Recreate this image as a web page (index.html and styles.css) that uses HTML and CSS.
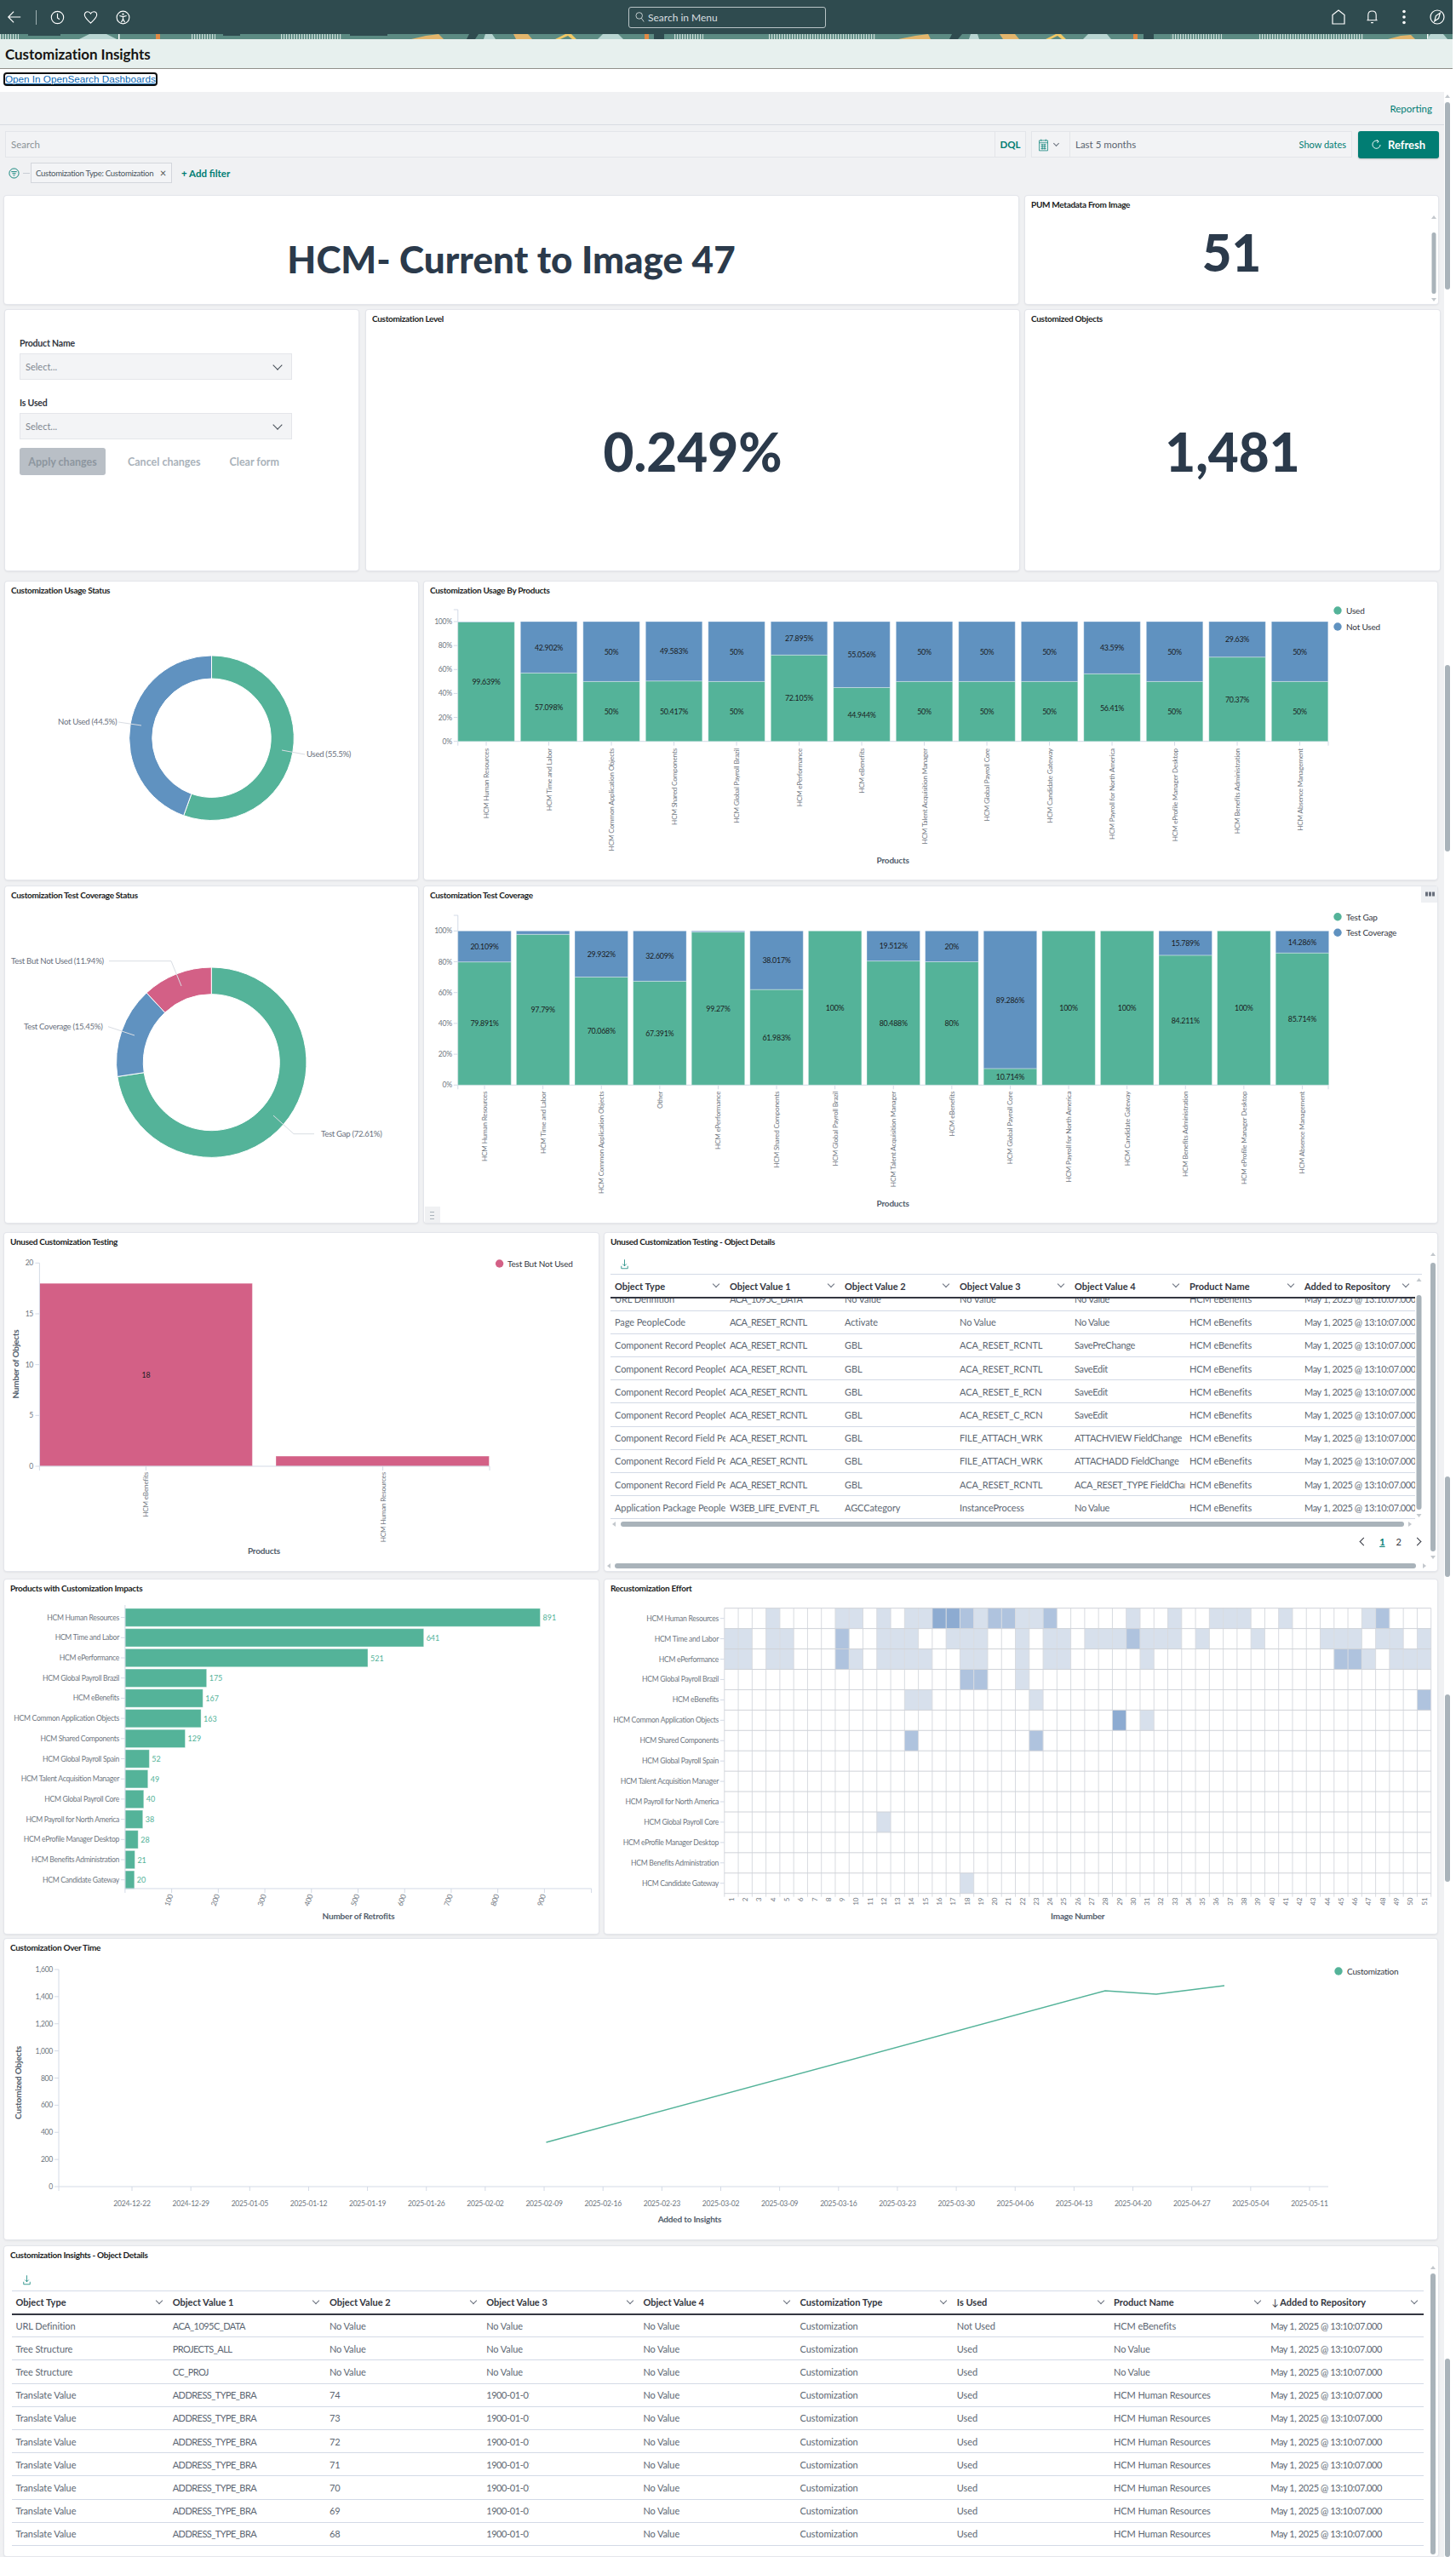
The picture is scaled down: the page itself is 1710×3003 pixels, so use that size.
FILE: index.html
```html
<!DOCTYPE html>
<html lang="en">
<head>
<meta charset="utf-8">
<title>Customization Insights</title>
<link rel="stylesheet" href="styles.css">
</head>
<body>
<header class="topbar">
  <div class="nav-left">
    <svg class="ico ico-back" viewBox="0 0 20 20"><path d="M18 10H2M9 3l-7 7 7 7"/></svg>
    <span class="nav-sep"></span>
    <svg class="ico ico-clock" viewBox="0 0 18 18"><circle cx="9" cy="9" r="7.6"/><path d="M9 4v5.4l2.6 2"/></svg>
    <svg class="ico ico-heart" viewBox="0 0 18 18"><path d="M9 16C5 12 1.4 9.2 1.4 5.8 1.4 3.4 3.2 1.8 5.2 1.8 6.8 1.8 8.2 2.7 9 4.2 9.8 2.7 11.2 1.8 12.8 1.8c2 0 3.8 1.6 3.8 4C16.600 9.200 13 12 9 16z"/></svg>
    <svg class="ico ico-access" viewBox="0 0 18 18"><circle cx="9" cy="9" r="7.8"/><circle class="dot" cx="9" cy="4.9" r="1.1"/><path d="M4.600 6.900L9 8l4.400-1.100M9 8v3M9 11l-2.200 4M9 11l2.200 4"/></svg>
  </div>
  <div class="menu-search">
    <svg class="ico-s" viewBox="0 0 14 16"><circle cx="6" cy="6" r="4.800"/><path d="M9.400 9.800L13 15"/></svg>
    <span>Search in Menu</span>
  </div>
  <div class="nav-right">
    <svg class="ico ico-home" viewBox="0 0 16 18"><path d="M1 17V6.500L8 1l7 5.500V17z"/></svg>
    <svg class="ico ico-bell" viewBox="0 0 16 18"><path d="M3 13V6.500C3 3.500 5 1.600 8 1.600s5 1.900 5 4.900V13zM1.500 13h13M6.500 16h3"/></svg>
    <svg class="ico ico-kebab" viewBox="0 0 6 18"><circle class="dot" cx="3" cy="2.500" r="1.800"/><circle class="dot" cx="3" cy="9" r="1.800"/><circle class="dot" cx="3" cy="15.500" r="1.800"/></svg>
    <svg class="ico ico-compass" viewBox="0 0 18 18"><circle cx="9" cy="9" r="8"/><path d="M12.400 4.200L10.600 10.600 5.800 13.800 7.400 7.600z"/></svg>
  </div>
</header>

<svg class="banner" viewBox="0 0 1706 6" preserveAspectRatio="none">
  <defs><pattern id="stripes" width="3" height="6" patternUnits="userSpaceOnUse"><rect width="1.200" height="6" fill="#cfe0dc"/></pattern></defs>
  <rect x="0" width="22" height="6" fill="url(#stripes)"/><rect x="33" width="38" height="2" fill="#2f4b4f"/>
  <polygon points="93,6 105,0 125,0 137,6" fill="#b9d5d2"/><rect x="139" width="1.500" height="6" fill="#fff"/>
  <rect x="183" width="5" height="6" fill="#e08a45"/><rect x="225" width="28" height="6" fill="url(#stripes)"/>
  <rect x="262" width="20" height="2" fill="#2f4b4f"/><rect x="329" width="72" height="6" fill="url(#stripes)"/><rect x="411" width="44" height="2" fill="#2f4b4f"/>
  <polygon points="483,6 500,2 515,0 521,6" fill="#e3b56c"/><polygon points="551,0 562,0 558,6 548,6" fill="#2f4b4f"/>
  <polygon points="570,0 578,0 582,6 568,6" fill="#b9d5d2"/><polygon points="603,0 620,0 625,6 606,6" fill="#e3b56c"/>
  <polygon points="652,6 664,0 671,0 677,6 672,6 667,2 658,6" fill="#f0c866"/><polygon points="702,6 708,0 726,0 732,6" fill="#b9d5d2"/>
  <rect x="757" width="5" height="6" fill="#e08a45"/><rect x="768" width="12" height="6" fill="#2f4b4f"/><rect x="792" width="34" height="6" fill="url(#stripes)"/>
  <rect x="903" width="125" height="6" fill="url(#stripes)"/><polygon points="1055,6 1075,2 1090,0 1093,6" fill="#e3b56c"/>
  <polygon points="1118,0 1130,0 1125,6 1115,6" fill="#2f4b4f"/><polygon points="1140,0 1148,0 1150,6 1138,6" fill="#b9d5d2"/>
  <polygon points="1174,0 1192,0 1197,6 1178,6" fill="#e3b56c"/><polygon points="1228,6 1240,0 1246,0 1252,6 1247,6 1242,2 1234,6" fill="#f0c866"/>
  <polygon points="1272,6 1278,0 1300,0 1305,6" fill="#b9d5d2"/><rect x="1331" width="5" height="6" fill="#e08a45"/><rect x="1343" width="12" height="6" fill="#2f4b4f"/>
  <rect x="1375" width="60" height="6" fill="url(#stripes)"/><rect x="1478" width="124" height="6" fill="url(#stripes)"/>
  <polygon points="1630,6 1645,2 1657,1 1662,6" fill="#e3b56c"/><rect x="1676" width="1.500" height="6" fill="#fff"/><polygon points="1676,6 1680,0 1695,0 1700,6" fill="#b9d5d2"/>
</svg>

<div class="titleband"><h1>Customization Insights</h1></div>
<div class="linkbar"><a class="oslink" href="#">Open In OpenSearch Dashboards</a></div>

<main class="main">
  <div class="reportbar"><span class="teal">Reporting</span></div>

  <div class="querybar">
    <div class="qsearch"><span class="qtext">Search</span><span class="dql">DQL</span></div>
    <div class="datepick">
      <span class="dp-ico">
        <svg class="cal" viewBox="0 0 12 16"><path d="M.5 2.500h11v13H.5zM.5 5.500h11M3 1v2.500M9 1v2.500M2.500 8h7M2.500 10.500h7M2.500 13h7M4.500 7v7M7.500 7v7"/></svg>
        <i class="chev"></i>
      </span>
      <span class="dp-text">Last 5 months</span>
      <span class="dp-show">Show dates</span>
    </div>
    <button class="refresh"><svg class="ref" viewBox="0 0 12 14"><path d="M8.800 2.600A5 5 0 1 0 11 7M6.400.8l2.400 1.800-1.800 2.200"/></svg>Refresh</button>
  </div>

  <div class="filterbar">
    <svg class="f-ico" viewBox="0 0 14 14"><circle cx="7" cy="7" r="6"/><path d="M3.500 5h7M4.800 7.300h4.400M6 9.600h2"/></svg>
    <span class="f-dash"></span>
    <span class="chip">Customization Type: Customization<i class="x">×</i></span>
    <span class="addf">+ Add filter</span>
  </div>

  <div class="row r1">
    <section class="panel center"><div class="bigtitle">HCM- Current to Image 47</div></section>
    <section class="panel"><h2>PUM Metadata From Image</h2><div class="metric m51">51</div></section>
  </div>

  <div class="row r2">
    <section class="panel form">
      <label>Product Name</label>
      <div class="sel">Select...</div>
      <label class="second">Is Used</label>
      <div class="sel">Select...</div>
      <div class="btns"><span class="apply">Apply changes</span><span class="ghost g1">Cancel changes</span><span class="ghost g2">Clear form</span></div>
    </section>
    <section class="panel"><h2>Customization Level</h2><div class="metric m-big">0.249%</div></section>
    <section class="panel"><h2>Customized Objects</h2><div class="metric m-big">1,481</div></section>
  </div>

  <div class="row r3">
    <section class="panel"><h2>Customization Usage Status</h2><svg class="canvas" id="c-usage"></svg></section>
    <section class="panel"><h2>Customization Usage By Products</h2><svg class="canvas" id="c-usagebars"></svg></section>
  </div>

  <div class="row r4">
    <section class="panel"><h2>Customization Test Coverage Status</h2><svg class="canvas" id="c-cover"></svg></section>
    <section class="panel"><h2>Customization Test Coverage</h2><svg class="canvas" id="c-coverbars"></svg></section>
  </div>

  <div class="row r5">
    <section class="panel"><h2>Unused Customization Testing</h2><svg class="canvas" id="c-unused"></svg></section>
    <section class="panel tpanel"><h2>Unused Customization Testing - Object Details</h2>
      <svg class="dl" viewBox="0 0 12 16"><path d="M6 1v10M3 8l3 3 3-3M1 11v4h10v-4"/></svg>
      <div class="thead-wrap">
      <table class="tbl t7"><thead><tr><th>Object Type</th><th>Object Value 1</th><th>Object Value 2</th><th>Object Value 3</th><th>Object Value 4</th><th>Product Name</th><th>Added to Repository</th></tr></thead></table>
      </div>
      <div class="tscroll">
      <table class="tbl t7"><tbody>
        <tr><td>URL Definition</td><td>ACA_1095C_DATA</td><td>No Value</td><td>No Value</td><td>No Value</td><td>HCM eBenefits</td><td>May 1, 2025 @ 13:10:07.000</td></tr>
        <tr><td>Page PeopleCode</td><td>ACA_RESET_RCNTL</td><td>Activate</td><td>No Value</td><td>No Value</td><td>HCM eBenefits</td><td>May 1, 2025 @ 13:10:07.000</td></tr>
        <tr><td>Component Record PeopleCode</td><td>ACA_RESET_RCNTL</td><td>GBL</td><td>ACA_RESET_RCNTL</td><td>SavePreChange</td><td>HCM eBenefits</td><td>May 1, 2025 @ 13:10:07.000</td></tr>
        <tr><td>Component Record PeopleCode</td><td>ACA_RESET_RCNTL</td><td>GBL</td><td>ACA_RESET_RCNTL</td><td>SaveEdit</td><td>HCM eBenefits</td><td>May 1, 2025 @ 13:10:07.000</td></tr>
        <tr><td>Component Record PeopleCode</td><td>ACA_RESET_RCNTL</td><td>GBL</td><td>ACA_RESET_E_RCN</td><td>SaveEdit</td><td>HCM eBenefits</td><td>May 1, 2025 @ 13:10:07.000</td></tr>
        <tr><td>Component Record PeopleCode</td><td>ACA_RESET_RCNTL</td><td>GBL</td><td>ACA_RESET_C_RCN</td><td>SaveEdit</td><td>HCM eBenefits</td><td>May 1, 2025 @ 13:10:07.000</td></tr>
        <tr><td>Component Record Field PeopleCode</td><td>ACA_RESET_RCNTL</td><td>GBL</td><td>FILE_ATTACH_WRK</td><td>ATTACHVIEW FieldChange</td><td>HCM eBenefits</td><td>May 1, 2025 @ 13:10:07.000</td></tr>
        <tr><td>Component Record Field PeopleCode</td><td>ACA_RESET_RCNTL</td><td>GBL</td><td>FILE_ATTACH_WRK</td><td>ATTACHADD FieldChange</td><td>HCM eBenefits</td><td>May 1, 2025 @ 13:10:07.000</td></tr>
        <tr><td>Component Record Field PeopleCode</td><td>ACA_RESET_RCNTL</td><td>GBL</td><td>ACA_RESET_RCNTL</td><td>ACA_RESET_TYPE FieldChange</td><td>HCM eBenefits</td><td>May 1, 2025 @ 13:10:07.000</td></tr>
        <tr><td>Application Package PeopleCode</td><td>W3EB_LIFE_EVENT_FL</td><td>AGCCategory</td><td>InstanceProcess</td><td>No Value</td><td>HCM eBenefits</td><td>May 1, 2025 @ 13:10:07.000</td></tr>
      </tbody></table>
      </div>
      <div class="pager"><i class="pg-l"></i><b>1</b><span>2</span><i class="pg-r"></i></div>
    </section>
  </div>

  <div class="row r6">
    <section class="panel"><h2>Products with Customization Impacts</h2><svg class="canvas" id="c-impact"></svg></section>
    <section class="panel"><h2>Recustomization Effort</h2><svg class="canvas" id="c-heat"></svg></section>
  </div>

  <div class="row r7">
    <section class="panel"><h2>Customization Over Time</h2><svg class="canvas" id="c-time"></svg></section>
  </div>

  <div class="row r8">
    <section class="panel tpanel2"><h2>Customization Insights - Object Details</h2>
      <svg class="dl dl2" viewBox="0 0 12 16"><path d="M6 1v10M3 8l3 3 3-3M1 11v4h10v-4"/></svg>
      <table class="tbl t9">
        <thead><tr><th>Object Type</th><th>Object Value 1</th><th>Object Value 2</th><th>Object Value 3</th><th>Object Value 4</th><th>Customization Type</th><th>Is Used</th><th>Product Name</th><th><span class="sort">↓</span>Added to Repository</th></tr></thead>
        <tbody>
          <tr><td>URL Definition</td><td>ACA_1095C_DATA</td><td>No Value</td><td>No Value</td><td>No Value</td><td>Customization</td><td>Not Used</td><td>HCM eBenefits</td><td>May 1, 2025 @ 13:10:07.000</td></tr>
          <tr><td>Tree Structure</td><td>PROJECTS_ALL</td><td>No Value</td><td>No Value</td><td>No Value</td><td>Customization</td><td>Used</td><td>No Value</td><td>May 1, 2025 @ 13:10:07.000</td></tr>
          <tr><td>Tree Structure</td><td>CC_PROJ</td><td>No Value</td><td>No Value</td><td>No Value</td><td>Customization</td><td>Used</td><td>No Value</td><td>May 1, 2025 @ 13:10:07.000</td></tr>
          <tr><td>Translate Value</td><td>ADDRESS_TYPE_BRA</td><td>74</td><td><span class="dt">1900-01-01</span></td><td>No Value</td><td>Customization</td><td>Used</td><td>HCM Human Resources</td><td>May 1, 2025 @ 13:10:07.000</td></tr>
          <tr><td>Translate Value</td><td>ADDRESS_TYPE_BRA</td><td>73</td><td><span class="dt">1900-01-01</span></td><td>No Value</td><td>Customization</td><td>Used</td><td>HCM Human Resources</td><td>May 1, 2025 @ 13:10:07.000</td></tr>
          <tr><td>Translate Value</td><td>ADDRESS_TYPE_BRA</td><td>72</td><td><span class="dt">1900-01-01</span></td><td>No Value</td><td>Customization</td><td>Used</td><td>HCM Human Resources</td><td>May 1, 2025 @ 13:10:07.000</td></tr>
          <tr><td>Translate Value</td><td>ADDRESS_TYPE_BRA</td><td>71</td><td><span class="dt">1900-01-01</span></td><td>No Value</td><td>Customization</td><td>Used</td><td>HCM Human Resources</td><td>May 1, 2025 @ 13:10:07.000</td></tr>
          <tr><td>Translate Value</td><td>ADDRESS_TYPE_BRA</td><td>70</td><td><span class="dt">1900-01-01</span></td><td>No Value</td><td>Customization</td><td>Used</td><td>HCM Human Resources</td><td>May 1, 2025 @ 13:10:07.000</td></tr>
          <tr><td>Translate Value</td><td>ADDRESS_TYPE_BRA</td><td>69</td><td><span class="dt">1900-01-01</span></td><td>No Value</td><td>Customization</td><td>Used</td><td>HCM Human Resources</td><td>May 1, 2025 @ 13:10:07.000</td></tr>
          <tr><td>Translate Value</td><td>ADDRESS_TYPE_BRA</td><td>68</td><td><span class="dt">1900-01-01</span></td><td>No Value</td><td>Customization</td><td>Used</td><td>HCM Human Resources</td><td>May 1, 2025 @ 13:10:07.000</td></tr>
        </tbody>
      </table>
    </section>
  </div>
</main>

<svg class="overlay" id="overlay" viewBox="0 0 1710 3003"></svg>
<script src="charts.js"></script>
</body>
</html>
```
FILE: styles.css
```css
* { box-sizing: border-box; }
html, body { margin: 0; padding: 0; height: 3003px; overflow: hidden; background: #fff; }
body { width: 1710px; position: relative; font-family: Lato, "Noto Sans", sans-serif; color: #343741; }

.topbar { width: 1706px; height: 40px; background: #2f4b4f; display: flex; align-items: center; position: relative; }
.ico { fill: none; stroke: #fff; stroke-width: 1.2; display: block; }
.ico .dot { fill: #fff; stroke: none; }
.nav-left { display: flex; align-items: center; height: 40px; padding-left: 8px; }
.ico-back { width: 18px; height: 18px; stroke-width: 1.3; }
.nav-sep { width: 1px; height: 17px; background: #9fb0b2; margin: 0 16px 0 16px; }
.ico-clock { width: 17px; height: 17px; }
.ico-heart { width: 17px; height: 17px; margin-left: 22px; }
.ico-access { width: 17px; height: 17px; margin-left: 21px; }
.menu-search { margin-left: 585px; width: 232px; height: 25px; border: 1px solid #b9c4c6; border-radius: 3px; display: flex; align-items: center; padding-left: 7px; color: #d9dfe0; font-size: 12px; }
.ico-s { width: 11px; height: 14px; fill: none; stroke: #d9dfe0; stroke-width: 1.100; margin-right: 4px; }
.nav-right { margin-left: auto; display: flex; align-items: center; padding-right: 9px; }
.ico-home { width: 16px; height: 18px; }
.ico-bell { width: 15px; height: 18px; margin-left: 24px; }
.ico-kebab { width: 6px; height: 18px; margin-left: 27px; }
.ico-compass { width: 18px; height: 18px; margin-left: 27px; }

.banner { display: block; width: 1706px; height: 6px; background: #5c8b83; }
.titleband { width: 1706px; height: 35px; background: #e7f0ee; border-bottom: 1px solid #908f8a; display: flex; align-items: center; padding-left: 6px; }
.titleband h1 { margin: 0; font-size: 17px; font-weight: 700; color: #161513; letter-spacing: -.05px; }
.linkbar { height: 27px; padding: 6px 0 0 6px; display: flex; align-items: flex-start; }
.oslink { display: block; font-family: "Liberation Sans", sans-serif; font-size: 11.700px; line-height: 12px; color: #0b68b5; outline: 2px solid #111; border-radius: 2px; white-space: nowrap; }

.main { width: 1696px; height: 2895px; background: #f0f1f3; }
.teal { color: #017d73; }
.reportbar { height: 39px; border-bottom: 1px solid #d8dbe1; display: flex; justify-content: flex-end; align-items: center; padding-right: 14px; font-size: 11.500px; }
.querybar { display: flex; height: 32px; margin-top: 7px; padding-left: 6px; font-size: 11.500px; }
.qsearch { width: 1199px; height: 31px; background: #f2f3f5; border: 1px solid #e3e5e9; display: flex; align-items: center; justify-content: space-between; padding-left: 6px; }
.qtext { color: #8b9296; }
.dql { width: 36px; height: 100%; border-left: 1px solid #e3e5e9; display: flex; align-items: center; justify-content: center; color: #017d73; font-weight: 700; }
.datepick { width: 377px; height: 31px; margin-left: 6px; background: #f2f3f5; border: 1px solid #e3e5e9; display: flex; align-items: center; }
.dp-ico { width: 45px; height: 100%; border-right: 1px solid #e3e5e9; display: flex; align-items: center; padding-left: 8px; }
.cal { width: 11px; height: 16px; fill: none; stroke: #017d73; stroke-width: .8; }
.chev { width: 5px; height: 5px; border-right: 1px solid #69707d; border-bottom: 1px solid #69707d; transform: rotate(45deg); margin: -3px 0 0 7px; }
.dp-text { margin-left: 6px; color: #5b6570; }
.dp-show { margin-left: auto; margin-right: 6px; color: #017d73; font-size: 11px; }
.refresh { width: 95px; height: 32px; margin-left: 7px; background: #017d73; border: 0; border-radius: 3px; color: #fff; font: 700 13px Lato, sans-serif; display: flex; align-items: center; justify-content: center; gap: 8px; box-shadow: 0 1px 2px rgba(0,0,0,.2); }
.ref { width: 11px; height: 14px; fill: none; stroke: #fff; stroke-width: 1; }

.filterbar { display: flex; align-items: center; height: 24px; margin-top: 5px; padding-left: 10px; font-size: 9.600px; letter-spacing: -.3px; }
.f-ico { width: 13px; height: 13px; fill: none; stroke: #017d73; stroke-width: 1; }
.f-dash { width: 8px; height: 1px; background: #c9ced4; margin: 0 1px 0 4px; }
.chip { width: 166px; height: 24px; background: #f3f4f6; border: 1px solid #d3d6dc; display: flex; align-items: center; padding-left: 5px; color: #4a545e; white-space: nowrap; position: relative; }
.x { position: absolute; right: 6px; font-style: normal; font-size: 13px; color: #555; }
.addf { margin-left: 11px; color: #017d73; font-weight: 700; font-size: 11.500px; white-space: nowrap; letter-spacing: 0; }

.row { display: grid; padding-left: 5px; column-gap: 7px; }
.r1 { margin-top: 15px; height: 127px; grid-template-columns: 1191px 485px; column-gap: 8px; }
.r2 { margin-top: 7px; height: 306px; padding-left: 6px; grid-template-columns: 415px 767px 485px; column-gap: 9px; }
.r2 .panel:last-child { margin-left: -2px; }
.r3 { margin-top: 13px; height: 350px; padding-left: 6px; grid-template-columns: 485px 1190px; }
.r4 { margin-top: 8px; height: 395px; padding-left: 6px; grid-template-columns: 485px 1190px; }
.r5 { margin-top: 12px; height: 397px; grid-template-columns: 698px 978px; }
.r6 { margin-top: 10px; height: 416px; grid-template-columns: 698px 978px; }
.r7 { margin-top: 6px; height: 353px; grid-template-columns: 1683px; }
.r8 { margin-top: 8px; height: 364px; grid-template-columns: 1684px; }

.panel { position: relative; background: #fff; border-radius: 3px; box-shadow: 0 0 0 1px #e4e6eb, 0 1px 3px rgba(0,0,0,.12); overflow: hidden; min-width: 0; }
.panel h2 { margin: 0; position: relative; z-index: 1; padding: 4px 0 0 7px; font-size: 10px; line-height: 12px; font-weight: 700; color: #1a1c21; white-space: nowrap; letter-spacing: -.3px; }
.center { display: flex; align-items: center; justify-content: center; }
.bigtitle { font-size: 44px; font-weight: 900; color: #2b3a4b; white-space: nowrap; margin-top: 20px; }
.metric { position: absolute; left: 0; right: 0; text-align: center; font-weight: 900; color: #2b3a4b; line-height: 1; }
.m51 { font-size: 60px; top: 36px; }
.m-big { font-size: 62px; top: 135px; }

.form { padding: 33px 0 0 17px; font-size: 11.500px; }
.form label { display: block; font-size: 10.500px; font-weight: 700; color: #343741; height: 13px; line-height: 13px; letter-spacing: -.2px; }
.form label.second { margin-top: 21px; }
.sel { width: 320px; height: 31px; margin-top: 5px; background: #f3f4f6; border: 1px solid #e4e6ea; display: flex; align-items: center; padding-left: 6px; color: #7f8790; font-size: 11px; position: relative; }
.sel::after { content: ""; position: absolute; right: 12px; top: 9px; width: 7px; height: 7px; border-right: 1.200px solid #444c55; border-bottom: 1.200px solid #444c55; transform: rotate(45deg); }
.btns { display: flex; align-items: center; margin-top: 10px; font-size: 12.500px; font-weight: 700; color: #a9b2ba; white-space: nowrap; }
.apply { width: 101px; height: 32px; background: #b9bfc6; color: #8d969f; border-radius: 3px; display: flex; align-items: center; justify-content: center; }
.g1 { margin-left: 26px; }
.g2 { margin-left: 34px; }

.canvas { position: absolute; left: 0; top: 0; width: 100%; height: 100%; }
.c { dominant-baseline: central; }
.t-axis { font-size: 8.600px; fill: #6f7781; letter-spacing: -.3px; }
.t-rot { font-size: 8.200px; fill: #6f7781; letter-spacing: -.2px; }
.t-val { font-size: 8.800px; fill: #1a1c21; letter-spacing: -.2px; }
.t-title { font-size: 10px; font-weight: 700; fill: #525d6b; letter-spacing: -.2px; }
.t-leg { font-size: 10px; fill: #343741; letter-spacing: -.2px; }
.t-pie { font-size: 9.600px; fill: #69707d; letter-spacing: -.3px; }
.t-green { font-size: 9px; fill: #54b399; }
.a-line { stroke: #d3dae6; fill: none; stroke-width: 1; }
.lead { stroke: #d9dde3; fill: none; stroke-width: 1; }

.dl { display: block; width: 9px; height: 13px; margin: 14px 0 0 19px; fill: none; stroke: #017d73; stroke-width: 1; }
.thead-wrap { margin: 5px 0 0 7px; width: 953px; border-top: 1px solid #d3dae6; }
.tbl { border-collapse: collapse; table-layout: fixed; font-size: 11px; }
.t7 { width: 945px; }
.tbl th { position: relative; text-align: left; font-weight: 700; color: #343741; padding: 0 0 0 5px; white-space: nowrap; overflow: hidden; font-size: 11px; }
.tbl th::after { content: ""; position: absolute; right: 8px; top: 50%; width: 5px; height: 5px; margin-top: -5px; border-right: 1px solid #69707d; border-bottom: 1px solid #69707d; transform: rotate(45deg); }
.t7 th { height: 27px; border-bottom: 2px solid #343741; }
.t7 td, .t9 td { padding: 0 11px 0 5px; white-space: nowrap; overflow: hidden; color: #5d6773; border-bottom: 1px solid #d3dae6; letter-spacing: -.1px; }
.tbl td:nth-child(2) { letter-spacing: -.55px; }
.tbl td:last-child { letter-spacing: -.4px; }
.t7 td:nth-child(5) { letter-spacing: -.3px; }
.t7 td { height: 27.200px; }
.tscroll { margin-left: 7px; width: 945px; height: 259px; overflow: hidden; }
.tscroll .t7 { margin-top: -13px; }
.pager { position: absolute; right: 20px; top: 356px; display: flex; align-items: center; gap: 13px; font-size: 11px; color: #343741; }
.pager b { color: #017d73; text-decoration: underline; }
.pg-l, .pg-r { width: 7px; height: 7px; border-left: 1px solid #343741; border-bottom: 1px solid #343741; }
.pg-l { transform: rotate(45deg); margin-right: 2px; }
.pg-r { transform: rotate(225deg); margin-left: 2px; }

.dl2 { margin: 17px 0 0 22px; }
.t9 { width: 1658px; margin: 6px 0 0 9px; }
.t9 th { height: 27px; border-top: 1px solid #d3dae6; border-bottom: 2px solid #343741; padding-left: 4.500px; }
.t9 td { height: 27.200px; padding: 0 6px 0 4.500px; }
.dt { display: inline-block; width: 51px; overflow: hidden; vertical-align: bottom; letter-spacing: -.4px; }
.sort { display: inline-block; width: 10px; margin-left: 1px; font-weight: 400; font-size: 11px; }

.overlay { position: absolute; left: 0; top: 0; width: 1710px; height: 3003px; pointer-events: none; }
```
FILE: charts.js
```js
var G = '#54b399', B = '#6092c0', P = '#d36086', BAR = 'rgba(255,255,255,.35)';

function draw(id, box, html) {
  var s = document.getElementById(id);
  s.setAttribute('viewBox', box.join(' '));
  s.innerHTML = html;
}
function text(x, y, s, cls, anchor) {
  return '<text class="c ' + cls + '" x="' + x + '" y="' + y + '" text-anchor="' + (anchor || 'start') + '">' + s + '</text>';
}
function vtext(x, y, s, cls, anchor, angle) {
  return '<text class="c ' + cls + '" transform="translate(' + x + ' ' + y + ') rotate(' + (angle || -90) + ')" text-anchor="' + (anchor || 'end') + '">' + s + '</text>';
}
function line(x1, y1, x2, y2, cls) {
  return '<line class="' + (cls || 'a-line') + '" x1="' + x1 + '" y1="' + y1 + '" x2="' + x2 + '" y2="' + y2 + '"/>';
}
function rect(x, y, w, h, fill, stroke) {
  return '<rect x="' + x + '" y="' + y + '" width="' + w + '" height="' + h + '" fill="' + fill + '"' + (stroke ? ' stroke="' + stroke + '"' : '') + '/>';
}
function dot(x, y, c) {
  return '<circle cx="' + x + '" cy="' + y + '" r="4.700" fill="' + c + '"/>';
}
function arc(cx, cy, r0, r1, a0, a1, fill) {
  function p(r, a) { var t = a * 2 * Math.PI - Math.PI / 2; return (cx + r * Math.cos(t)).toFixed(2) + ' ' + (cy + r * Math.sin(t)).toFixed(2); }
  var big = a1 - a0 > 0.5 ? 1 : 0;
  return '<path fill="' + fill + '" stroke="#fff" stroke-width="1" d="M' + p(r1, a0) + 'A' + r1 + ' ' + r1 + ' 0 ' + big + ' 1 ' + p(r1, a1) +
    'L' + p(r0, a1) + 'A' + r0 + ' ' + r0 + ' 0 ' + big + ' 0 ' + p(r0, a0) + 'Z"/>';
}

/* ---- donuts ---- */
draw('c-usage', [6, 683, 485, 350],
  arc(248.5, 866.7, 69.7, 96.8, 0, .555, G) + arc(248.5, 866.7, 69.7, 96.8, .555, 1, B) +
  '<path class="lead" d="M139 848L166 852"/><path class="lead" d="M331 881L358 886"/>' +
  text(68, 847.7, 'Not Used (44.5%)', 't-pie') + text(360, 885.7, 'Used (55.5%)', 't-pie'));

draw('c-cover', [6, 1041, 485, 395],
  arc(248.3, 1247.7, 80, 111.7, 0, .7261, G) + arc(248.3, 1247.7, 80, 111.7, .7261, .8806, B) + arc(248.3, 1247.7, 80, 111.7, .8806, 1, P) +
  '<path class="lead" d="M128 1128.700H201L213 1158"/><path class="lead" d="M127 1205.700L158 1216"/><path class="lead" d="M369 1331.700H345L321 1310"/>' +
  text(13, 1128.7, 'Test But Not Used (11.94%)', 't-pie') + text(28, 1205.7, 'Test Coverage (15.45%)', 't-pie') + text(377, 1331.7, 'Test Gap (72.61%)', 't-pie'));

/* ---- stacked percentage bars ---- */
function stacked(id, box, o) {
  var h = '', H = o.y0 - o.y100, n = o.names.length;
  h += line(o.x0, o.axisTop, o.x0, o.y0 + 5) + line(o.x0, o.y0, o.xEnd, o.y0);
  h += line(o.xEnd, o.y0, o.xEnd, o.y0 + 5);
  for (var t = 0; t <= 100; t += 20) {
    var y = o.y0 - H * t / 100;
    h += line(o.x0 - 5, y, o.x0, y) + text(o.x0 - 7, y, t + '%', 't-axis', 'end');
  }
  h += line(o.x0 - 5, o.axisTop, o.x0, o.axisTop);
  o.names.forEach(function (nm, i) {
    var x = o.x0 + i * o.step, cx = x + o.bw / 2, a = o.a[i], b = 100 - a, ya = o.y0 - H * a / 100;
    h += rect(x, ya, o.bw, H * a / 100, G, BAR);
    if (b > 0) h += rect(x, o.y100, o.bw, H * b / 100, B, BAR);
    h += line(cx, o.y0, cx, o.y0 + 5);
    h += text(cx, o.y0 - H * a / 200, o.al[i], 't-val', 'middle');
    if (o.bl[i]) h += text(cx, o.y100 + H * b / 200, o.bl[i], 't-val', 'middle');
    h += vtext(cx, o.labelTop, nm, 't-rot');
  });
  h += text(1048.6, o.titleY, 'Products', 't-title', 'middle');
  h += dot(1571, o.leg[0], G) + text(1581, o.leg[0], o.legend[0], 't-leg');
  h += dot(1571, o.leg[1], B) + text(1581, o.leg[1], o.legend[1], 't-leg');
  draw(id, box, h);
}
stacked('c-usagebars', [498, 683, 1190, 350], {
  x0: 537.8, xEnd: 1560, y100: 730, y0: 870.7, axisTop: 716, step: 73.5, bw: 66.5, labelTop: 879, titleY: 1010,
  leg: [717, 736], legend: ['Used', 'Not Used'],
  names: ['HCM Human Resources', 'HCM Time and Labor', 'HCM Common Application Objects', 'HCM Shared Components', 'HCM Global Payroll Brazil', 'HCM ePerformance', 'HCM eBenefits', 'HCM Talent Acquisition Manager', 'HCM Global Payroll Core', 'HCM Candidate Gateway', 'HCM Payroll for North America', 'HCM eProfile Manager Desktop', 'HCM Benefits Administration', 'HCM Absence Management'],
  a: [99.639, 57.098, 50, 50.417, 50, 72.105, 44.944, 50, 50, 50, 56.41, 50, 70.37, 50],
  al: ['99.639%', '57.098%', '50%', '50.417%', '50%', '72.105%', '44.944%', '50%', '50%', '50%', '56.41%', '50%', '70.37%', '50%'],
  bl: ['', '42.902%', '50%', '49.583%', '50%', '27.895%', '55.056%', '50%', '50%', '50%', '43.59%', '50%', '29.63%', '50%']
});
stacked('c-coverbars', [498, 1041, 1190, 395], {
  x0: 537.8, xEnd: 1560, y100: 1093.3, y0: 1274.3, axisTop: 1075, step: 68.6, bw: 62.5, labelTop: 1281.7, titleY: 1413,
  leg: [1076.7, 1095.3], legend: ['Test Gap', 'Test Coverage'],
  names: ['HCM Human Resources', 'HCM Time and Labor', 'HCM Common Application Objects', 'Other', 'HCM ePerformance', 'HCM Shared Components', 'HCM Global Payroll Brazil', 'HCM Talent Acquisition Manager', 'HCM eBenefits', 'HCM Global Payroll Core', 'HCM Payroll for North America', 'HCM Candidate Gateway', 'HCM Benefits Administration', 'HCM eProfile Manager Desktop', 'HCM Absence Management'],
  a: [79.891, 97.79, 70.068, 67.391, 99.27, 61.983, 100, 80.488, 80, 10.714, 100, 100, 84.211, 100, 85.714],
  al: ['79.891%', '97.79%', '70.068%', '67.391%', '99.27%', '61.983%', '100%', '80.488%', '80%', '10.714%', '100%', '100%', '84.211%', '100%', '85.714%'],
  bl: ['20.109%', '', '29.932%', '32.609%', '', '38.017%', '', '19.512%', '20%', '89.286%', '', '', '15.789%', '', '14.286%']
});

/* ---- unused testing ---- */
(function () {
  var h = '', x0 = 46.4, y0 = 1722, k = (1722 - 1483.3) / 20;
  h += rect(x0, y0 - 18 * k, 250, 18 * k, P, BAR) + rect(324, y0 - k, 250.5, k, P, BAR);
  h += line(x0, 1483.3, x0, y0 + 5) + line(x0, y0, 575, y0) + line(575, y0, 575, y0 + 5);
  [0, 5, 10, 15, 20].forEach(function (t) {
    h += line(x0 - 5, y0 - t * k, x0, y0 - t * k) + text(39, y0 - t * k, t, 't-axis', 'end');
  });
  h += line(171.4, y0, 171.4, y0 + 5) + line(449.6, y0, 449.6, y0 + 5);
  h += text(171.4, 1614, '18', 't-val', 'middle');
  h += vtext(171.4, 1729, 'HCM eBenefits', 't-rot') + vtext(449.6, 1729, 'HCM Human Resources', 't-rot');
  h += text(310, 1821, 'Products', 't-title', 'middle');
  h += vtext(18, 1602, 'Number of Objects', 't-title', 'middle');
  h += dot(586.6, 1484, P) + text(596, 1484, 'Test But Not Used', 't-leg');
  draw('c-unused', [5, 1448, 698, 397], h);
})();

/* ---- horizontal bars ---- */
(function () {
  var names = ['HCM Human Resources', 'HCM Time and Labor', 'HCM ePerformance', 'HCM Global Payroll Brazil', 'HCM eBenefits', 'HCM Common Application Objects', 'HCM Shared Components', 'HCM Global Payroll Spain', 'HCM Talent Acquisition Manager', 'HCM Global Payroll Core', 'HCM Payroll for North America', 'HCM eProfile Manager Desktop', 'HCM Benefits Administration', 'HCM Candidate Gateway'];
  var vals = [891, 641, 521, 175, 167, 163, 129, 52, 49, 40, 38, 28, 21, 20];
  var h = '', x0 = 146.9, k = 0.5472, y0 = 2218;
  names.forEach(function (nm, i) {
    var y = 1889 + i * 23.7, w = vals[i] * k;
    h += rect(x0, y, w, 21.3, G, BAR);
    h += line(x0 - 5, y + 10.6, x0, y + 10.6);
    h += text(140, y + 10.6, nm, 't-axis', 'end');
    h += text(x0 + w + 3, y + 10.6, vals[i], 't-green');
  });
  h += line(x0, 1885, x0, y0 + 5) + line(x0, y0, 694.6, y0) + line(694.6, y0, 694.6, y0 + 5);
  for (var t = 100; t <= 900; t += 100) {
    var x = x0 + t * k;
    h += line(x, y0, x, y0 + 5) + vtext(x - 1, y0 + 7, t, 't-axis', 'end', -70);
  }
  h += text(421, 2250, 'Number of Retrofits', 't-title', 'middle');
  draw('c-impact', [5, 1855, 698, 416], h);
})();

/* ---- heatmap ---- */
(function () {
  var L = '#d7e0ec', M = '#afc3de', D = '#8dabd1';
  var rows = [
    ['HCM Human Resources', { 4: L, 9: L, 10: L, 12: L, 14: L, 15: L, 16: D, 17: D, 18: M, 19: L, 20: M, 21: M, 22: L, 23: L, 24: M, 30: L, 33: L, 36: L, 37: L, 38: L, 41: L, 47: L, 48: M }],
    ['HCM Time and Labor', { 1: L, 2: L, 4: L, 5: L, 9: M, 12: L, 13: L, 14: L, 17: L, 18: L, 19: L, 22: L, 24: L, 25: L, 27: L, 28: L, 29: L, 30: M, 31: L, 32: L, 33: L, 35: L, 39: L, 44: L, 45: L, 46: L, 48: L, 49: L, 51: L }],
    ['HCM ePerformance', { 1: L, 2: L, 4: L, 5: L, 9: M, 10: L, 12: L, 13: L, 14: L, 15: L, 18: L, 19: L, 22: L, 24: L, 25: L, 31: L, 45: M, 46: M, 47: L, 49: L, 50: L, 51: L }],
    ['HCM Global Payroll Brazil', { 18: M, 19: M, 22: L }],
    ['HCM eBenefits', { 14: L, 15: L, 23: L, 51: M }],
    ['HCM Common Application Objects', { 29: D, 31: L }],
    ['HCM Shared Components', { 14: M, 23: M }],
    ['HCM Global Payroll Spain', {}],
    ['HCM Talent Acquisition Manager', {}],
    ['HCM Payroll for North America', {}],
    ['HCM Global Payroll Core', { 12: L }],
    ['HCM eProfile Manager Desktop', {}],
    ['HCM Benefits Administration', {}],
    ['HCM Candidate Gateway', { 18: L }]
  ];
  var x0 = 850.8, top = 1888.7, cw = 829.9 / 51, rh = 335 / 14, h = '', bottom = top + 14 * rh, xEnd = x0 + 51 * cw;
  rows.forEach(function (r, i) {
    var y = top + i * rh;
    Object.keys(r[1]).forEach(function (c) { h += rect(x0 + (c - 1) * cw, y, cw, rh, r[1][c]); });
    h += line(x0 - 5, y + rh / 2, x0, y + rh / 2);
    h += text(844, y + rh / 2, r[0], 't-axis', 'end');
  });
  for (var c = 0; c <= 51; c++) {
    var x = x0 + c * cw;
    h += '<line x1="' + x + '" y1="' + top + '" x2="' + x + '" y2="' + (bottom + 4) + '" stroke="#d8dbe0"/>';
    if (c < 51) h += vtext(x + cw / 2, bottom + 5, c + 1, 't-rot');
  }
  for (var r = 0; r <= 14; r++) {
    var yy = top + r * rh;
    h += '<line x1="' + x0 + '" y1="' + yy + '" x2="' + xEnd + '" y2="' + yy + '" stroke="#cfd2d8"/>';
  }
  h += text(1265.7, 2250, 'Image Number', 't-title', 'middle');
  draw('c-heat', [710, 1855, 978, 416], h);
})();

/* ---- over time ---- */
(function () {
  var h = '', x0 = 69, y0 = 2568, k = (2568 - 2313) / 8;
  h += line(x0, 2313, x0, y0 + 5) + line(x0, y0, 1560, y0);
  ['0', '200', '400', '600', '800', '1,000', '1,200', '1,400', '1,600'].forEach(function (t, i) {
    h += line(x0 - 5, y0 - i * k, x0, y0 - i * k) + text(x0 - 7, y0 - i * k, t, 't-axis', 'end');
  });
  var dates = ['2024-12-22', '2024-12-29', '2025-01-05', '2025-01-12', '2025-01-19', '2025-01-26', '2025-02-02', '2025-02-09', '2025-02-16', '2025-02-23', '2025-03-02', '2025-03-09', '2025-03-16', '2025-03-23', '2025-03-30', '2025-04-06', '2025-04-13', '2025-04-20', '2025-04-27', '2025-05-04', '2025-05-11'];
  dates.forEach(function (d, i) {
    var x = 155 + i * 69.15;
    h += line(x, y0, x, y0 + 5) + text(x, 2588, d, 't-axis', 'middle');
  });
  h += '<polyline points="641.500,2516 1298,2338 1358,2342 1438,2332" fill="none" stroke="' + G + '" stroke-width="1.500"/>';
  h += text(810, 2606, 'Added to Insights', 't-title', 'middle');
  h += vtext(21, 2446, 'Customized Objects', 't-title', 'middle');
  h += dot(1572, 2315, G) + text(1582, 2315, 'Customization', 't-leg');
  draw('c-time', [5, 2277, 1683, 353], h);
})();

/* ---- scrollbars and hover handles, in page coordinates ---- */
(function () {
  var C = '#a9b3ba', A = '#c3c8cd', h = '';
  function v(x, a, b, w) { h += '<rect x="' + (x - w / 2) + '" y="' + a + '" width="' + w + '" height="' + (b - a) + '" rx="' + (w / 2) + '" fill="' + C + '"/>'; }
  function hz(y, a, b, w) { h += '<rect x="' + a + '" y="' + (y - w / 2) + '" width="' + (b - a) + '" height="' + w + '" rx="' + (w / 2) + '" fill="' + C + '"/>'; }
  function tri(x, y, d) {
    var p = { u: [x - 3, y + 2, x + 3, y + 2, x, y - 2], d: [x - 3, y - 2, x + 3, y - 2, x, y + 2], l: [x + 2, y - 3, x + 2, y + 3, x - 2, y], r: [x - 2, y - 3, x - 2, y + 3, x + 2, y] }[d];
    h += '<polygon points="' + p.join(' ') + '" fill="' + A + '"/>';
  }
  [[120, 340], [781, 1000], [1734, 1852], [1990, 2210], [2770, 3003]].forEach(function (s) { v(1700, s[0], s[1], 6); });
  tri(1700, 113, 'u');
  v(1684, 273, 345, 5); tri(1684, 255, 'u'); tri(1684, 352, 'd');
  v(1683, 1483, 1822, 6); tri(1683, 1473, 'u'); tri(1683, 1829, 'd');
  v(1666.5, 1521, 1773, 6); tri(1666.5, 1503, 'u'); tri(1666.5, 1780, 'd');
  hz(1790, 729, 1649, 6); tri(721, 1790, 'l'); tri(1656, 1790, 'r');
  hz(1839, 722, 1663, 6); tri(715, 1839, 'l'); tri(1673, 1839, 'r');
  v(1683, 2670, 3000, 6); tri(1683, 2663, 'u');
  h += '<rect x="1669" y="1041" width="19" height="19" fill="#eef0f3"/>';
  [1674, 1678, 1682].forEach(function (x) { h += '<rect x="' + x + '" y="1047.500" width="3" height="5" fill="#69707d"/>'; });
  h += '<rect x="499" y="1417" width="18" height="19" fill="#f0f1f3"/>';
  [1423, 1427, 1431].forEach(function (y) { h += '<rect x="505" y="' + y + '" width="5" height="1" fill="#a9b3ba"/>'; });
  document.getElementById('overlay').innerHTML = h;
})();
```
